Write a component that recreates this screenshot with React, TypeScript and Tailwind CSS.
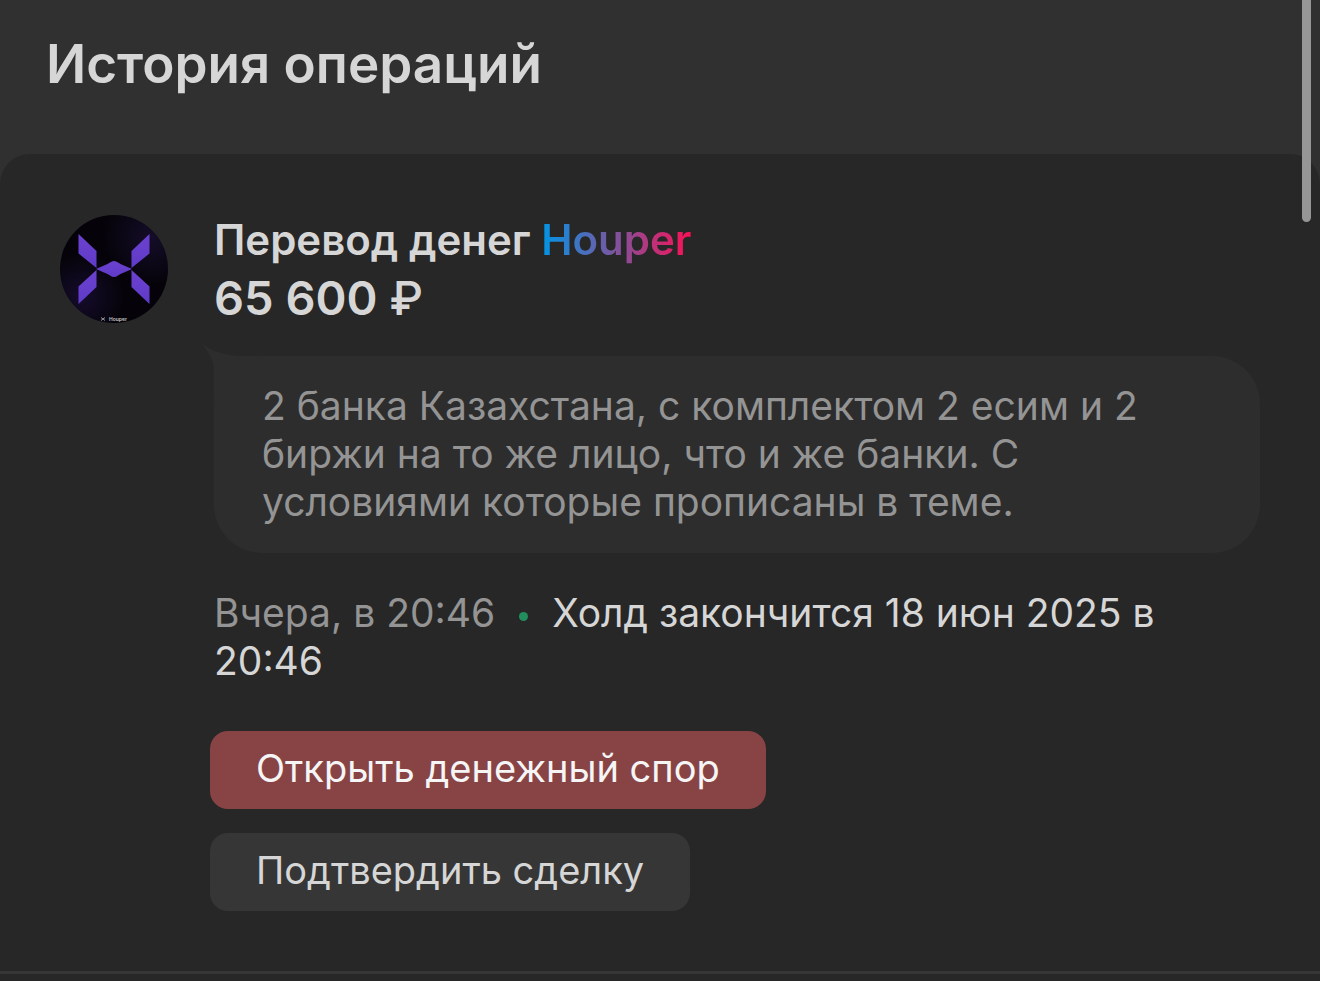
const operation = {
  title: "Перевод денег",
  user: "Houper",
  amount: "65 600",
  comment:
    "2 банка Казахстана, с комплектом 2 есим и 2 биржи на то же лицо, что и же банки. С условиями которые прописаны в теме.",
  date: "Вчера, в 20:46",
  hold: "Холд закончится 18 июн 2025 в 20:46",
};

function Avatar() {
  return (
    <svg viewBox="0 0 108 108" className="size-[108px] shrink-0" role="img" aria-label={operation.user}>
      <defs>
        <radialGradient id="glow-left" cx="0.2" cy="0.75" r="0.4">
          <stop offset="0" stopColor="#150c2c" />
          <stop offset="1" stopColor="#150c2c" stopOpacity="0" />
        </radialGradient>
        <radialGradient id="glow-right" cx="0.85" cy="0.2" r="0.45">
          <stop offset="0" stopColor="#150d29" />
          <stop offset="1" stopColor="#150d29" stopOpacity="0" />
        </radialGradient>
        <linearGradient id="avatar-mark" x1="0" y1="0" x2="0" y2="1">
          <stop offset="0" stopColor="#6c42cf" />
          <stop offset="1" stopColor="#5f3ac8" />
        </linearGradient>
      </defs>
      <circle cx="54" cy="54" r="54" fill="#050309" />
      <circle cx="54" cy="54" r="54" fill="url(#glow-left)" />
      <circle cx="54" cy="54" r="54" fill="url(#glow-right)" />
      <g fill="url(#avatar-mark)">
        <path d="M18.5 19 36.5 36V53L18.5 38.5Z" />
        <path d="M89.5 19 71.5 36V53L89.5 38.5Z" />
        <path d="M36.5 55V72L18.5 89V71.5Z" />
        <path d="M71.5 55V72L89.5 89V71.5Z" />
        <path d="M36 54 44 50.5Q47 49.5 50 47.500Q54 44.500 58 47.500Q61 49.500 64 50.500L72 54 64 57.500Q61 58.500 58 60.500Q54 63.500 50 60.500Q47 58.500 44 57.500Z" />
      </g>
      <path d="M41 102.500 43 104 41 105.500M45 102.500 43 104 45 105.500" fill="none" stroke="#bbb" strokeWidth="0.800" />
      <text x="49" y="106" fill="#c4c4c4" fontSize="5" fontWeight="600" fontFamily="Inter, sans-serif">
        Houper
      </text>
    </svg>
  );
}

function Operation() {
  return (
    <article className="flex gap-[42px] border-b-3 border-[#363636] px-[60px] pt-[61px] pb-[60px]">
      <Avatar />
      <div className="min-w-0 flex-1">
        <div className="pl-1">
          <h2 className="text-[42px] leading-[50px] font-semibold">
            {operation.title}{" "}
            <a
              href="#houper"
              className="bg-linear-to-r/srgb from-[#0096e6] to-[#ff0f55] bg-clip-text text-transparent"
            >
              {operation.user}
            </a>
          </h2>
          <div className="text-[47px] leading-[66px] font-semibold">
            {operation.amount} <span className="font-medium">₽</span>
          </div>

          {/* Speech bubble with the tail at its top left corner */}
          <div className="relative mt-[25px] rounded-[48px] bg-[#2d2d2d] px-12 pt-[26px] pb-[27px] leading-12 text-[#949494]">
            <svg viewBox="0 0 60 60" className="absolute -top-4 -left-4 size-[60px] text-[#2d2d2d]" aria-hidden="true">
              <path d="M0 0C12 12 28 16 48 16H60L16 60V32C16 18 8 8 0 0Z" fill="currentColor" />
            </svg>
            <p className="relative">{operation.comment}</p>
          </div>

          <p className="mt-9 leading-12">
            <span className="text-[#949494]">{operation.date}</span>
            <span className="mx-6 inline-block size-[9px] rounded-full bg-[#228e5d] align-middle" />
            {operation.hold}
          </p>
        </div>

        <div className="mt-[46px] flex flex-col items-start gap-6 text-[38px]">
          <button type="button" className="h-[78px] rounded-[18px] bg-[#884445] px-[46px] pb-1 text-[#f5f5f5]">
            Открыть денежный спор
          </button>
          <button type="button" className="h-[78px] rounded-[18px] bg-[#363636] px-[46px] pb-1">
            Подтвердить сделку
          </button>
        </div>
      </div>
    </article>
  );
}

export default function App() {
  return (
    <div className="relative min-h-screen bg-[#303030] font-[Inter,sans-serif] text-[39px] text-[#d6d6d6]">
      <header className="px-[46px] pt-7 pb-[54px]">
        <h1 className="text-[53px] leading-[72px] font-semibold">История операций</h1>
      </header>
      <main className="min-h-[827px] rounded-t-[30px] bg-[#272727]">
        <Operation />
      </main>
      {/* Scroll thumb */}
      <div className="absolute top-0 right-[9px] h-[222px] w-[9px] rounded-b-full bg-[#969696]" />
    </div>
  );
}
